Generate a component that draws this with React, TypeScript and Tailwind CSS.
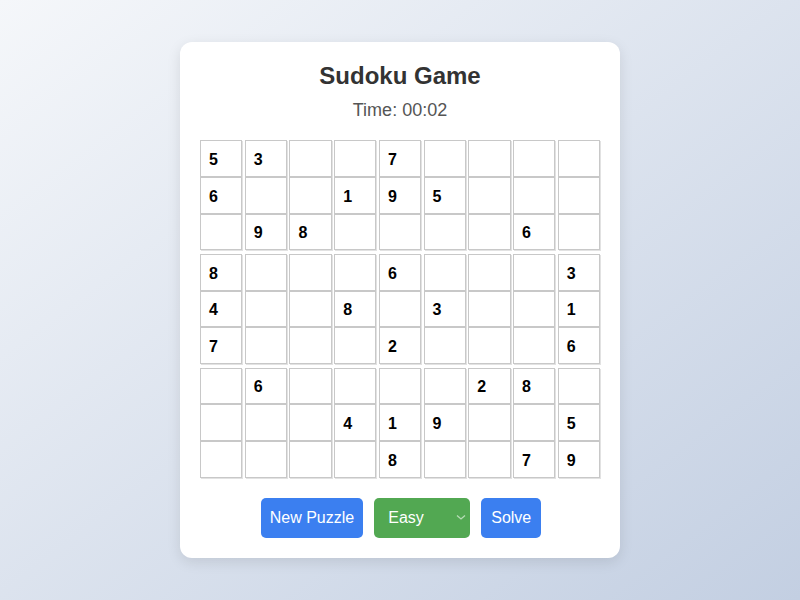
import React from "react";

const puzzle: (number | null)[][] = [
  [5, 3, null, null, 7, null, null, null, null],
  [6, null, null, 1, 9, 5, null, null, null],
  [null, 9, 8, null, null, null, null, 6, null],
  [8, null, null, null, 6, null, null, null, 3],
  [4, null, null, 8, null, 3, null, null, 1],
  [7, null, null, null, 2, null, null, null, 6],
  [null, 6, null, null, null, null, 2, 8, null],
  [null, null, null, 4, 1, 9, null, null, 5],
  [null, null, null, null, 8, null, null, 7, 9],
];

export default function App() {
  return (
    <div
      className="w-[800px] h-[600px] flex items-start justify-center bg-gradient-to-br from-[#f5f7fa] to-[#c3cfe2] pt-[42px]"
      style={{ fontFamily: '"Liberation Sans", Arial, sans-serif' }}
    >
      <div className="w-[440px] bg-white rounded-[12px] shadow-[0_4px_14px_rgba(0,0,0,0.1)] px-[20px] pt-[20px] pb-[20px] flex flex-col items-center">
        <h1 className="text-[24px] leading-[28px] font-bold text-[#333]">Sudoku Game</h1>
        <div className="text-[18px] leading-[22px] text-[#555] mt-[9px]">Time: 00:02</div>
        <div className="mt-[19px] w-[400px] flex flex-col">
          {puzzle.map((row, r) => (
            <div
              key={r}
              className={`grid grid-cols-9 gap-x-[2.5px] h-[36.75px] ${r === 3 || r === 6 ? "mt-[3.5px]" : ""}`}
            >
              {row.map((v, c) => (
                <div
                  key={c}
                  className="h-full border border-[#c8c8c8] shadow-[1px_1px_0_#e2e2e2] bg-white flex items-center pl-[8px] pt-[3px] text-[16px] font-bold text-black"
                >
                  {v ?? ""}
                </div>
              ))}
            </div>
          ))}
        </div>
        <div className="mt-[20px] flex items-center gap-[11px] pl-[2px]">
          <button className="h-[40px] px-[9px] rounded-[5px] bg-[#3b7ff0] text-white text-[16px]">New Puzzle</button>
          <div className="relative w-[96px] h-[40px]">
            <select
              defaultValue="Easy"
              className="appearance-none w-full h-full rounded-[5px] bg-[#52a852] text-white text-[16px] pl-[14px] outline-none"
            >
              <option>Easy</option>
              <option>Medium</option>
              <option>Hard</option>
            </select>
            <svg
              className="absolute right-[4px] top-[16px] pointer-events-none"
              width="10"
              height="7"
              viewBox="0 0 10 7"
              fill="none"
            >
              <path d="M1 1.5 L5 5 L9 1.5" stroke="#b6dcb6" strokeWidth="1.3" />
            </svg>
          </div>
          <button className="h-[40px] px-[10px] rounded-[5px] bg-[#3b7ff0] text-white text-[16px]">Solve</button>
        </div>
      </div>
    </div>
  );
}
